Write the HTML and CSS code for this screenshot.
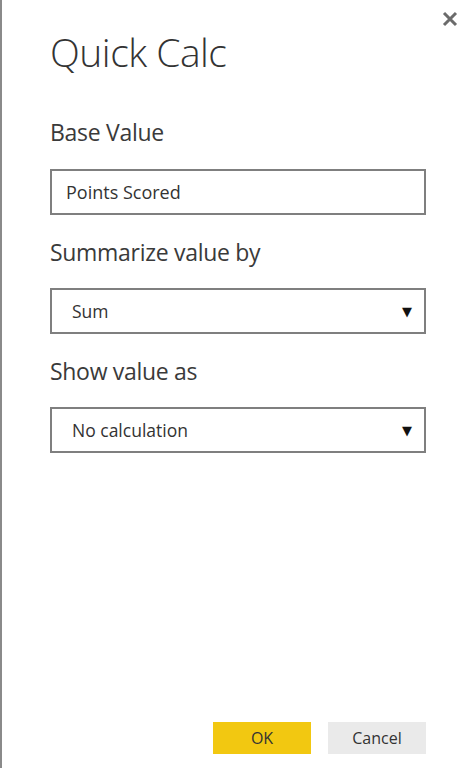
FILE: index.html
```html
<!DOCTYPE html>
<html>
<head>
<meta charset="utf-8">
<link rel="stylesheet" href="styles.css">
</head>
<body>
<div class="dialog">
  <button class="close" aria-label="Close">
    <svg width="16" height="16" viewBox="0 0 16 16"><path d="M2 2 L14 14 M14 2 L2 14" stroke="#6b6b6b" stroke-width="3" fill="none"/></svg>
  </button>
  <h1 class="title">Quick Calc</h1>
  <div class="field">
    <div class="label">Base Value</div>
    <div class="box">Points Scored</div>
  </div>
  <div class="field">
    <div class="label">Summarize value by</div>
    <div class="box select"><span>Sum</span><span class="arrow">▼</span></div>
  </div>
  <div class="field">
    <div class="label">Show value as</div>
    <div class="box select"><span>No calculation</span><span class="arrow">▼</span></div>
  </div>
  <div class="spacer"></div>
  <div class="buttons">
    <button class="btn ok">OK</button>
    <button class="btn cancel">Cancel</button>
  </div>
</div>
</body>
</html>
```

FILE: styles.css
```css
html, body {
  margin: 0;
  padding: 0;
  background: #ffffff;
}
body {
  font-family: "Open Sans", "Noto Sans", sans-serif;
  color: #333333;
}
.dialog {
  position: relative;
  box-sizing: border-box;
  height: 768px;
  border-left: 2px solid #8a8a8a;
  padding: 0 47px 14px 48px;
  display: flex;
  flex-direction: column;
}
.close {
  position: absolute;
  top: 11px;
  right: 15px;
  border: 0;
  background: none;
  padding: 0;
  width: 16px;
  height: 16px;
  display: block;
}
.close svg { display: block; }
.title {
  margin: 24px 0 0 0;
  font-weight: 300;
  font-size: 39px;
  line-height: 56px;
  color: #333;
  letter-spacing: -0.5px;
}
.field {
  display: flex;
  flex-direction: column;
}
.label {
  font-size: 23px;
  line-height: 32px;
  color: #3a3a3a;
  margin-top: 21px;
  margin-bottom: 20px;
  letter-spacing: -0.3px;
}
.title + .field .label { margin-top: 36px; margin-bottom: 21px; }
.box {
  box-sizing: border-box;
  height: 46px;
  border: 2px solid #7f7f7f;
  display: flex;
  align-items: center;
  padding-left: 14px;
  font-size: 18px;
  color: #333;
}
.select {
  padding-left: 20px;
  padding-right: 12px;
  justify-content: space-between;
  font-size: 17.5px;
}
.arrow {
  font-size: 13px;
  color: #111;
  font-family: "DejaVu Sans", sans-serif;
}
.spacer { flex: 1; }
.buttons {
  display: flex;
  justify-content: flex-end;
  gap: 17px;
}
.btn {
  width: 98px;
  height: 32px;
  border: 0;
  font-family: "Open Sans", "Noto Sans", sans-serif;
  font-size: 16px;
  color: #333;
  padding: 0;
}
.ok { background: #f2c811; }
.cancel { background: #eaeaea; }
```
